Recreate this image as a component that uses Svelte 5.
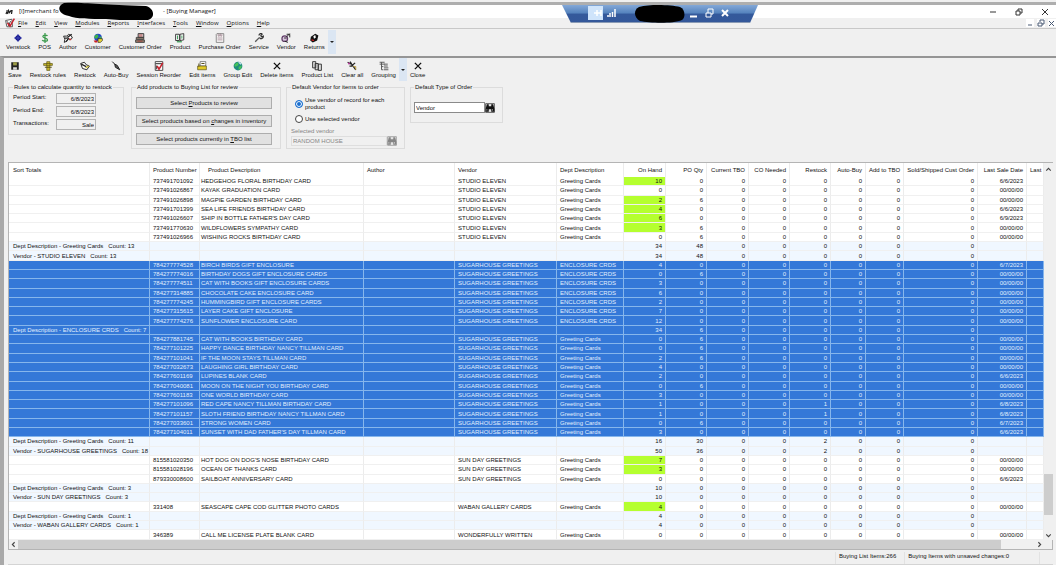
<script lang="ts" module>
	type Item = {
		kind: "item";
		sku: string;
		name: string;
		vendor: string;
		dept: string;
		onHand: number;
		poQty: number;
		restock: number;
		date: string;
		selected: boolean;
	};

	type Total = {
		kind: "total";
		label: string;
		onHand: number;
		poQty: number;
		restock: number;
		selected: boolean;
	};

	export type Row = Item | Total;

	type Entry = [sku: string, name: string, onHand: number, poQty: number, date?: string, restock?: number];

	const NO_DATE = "00/00/00";

	function items(vendor: string, dept: string, selected: boolean, entries: Entry[]): Row[] {
		return entries.map(([sku, name, onHand, poQty, date = NO_DATE, restock = 0]) => ({
			kind: "item",
			sku,
			name,
			vendor,
			dept,
			onHand,
			poQty,
			restock,
			date,
			selected
		}));
	}

	function total(label: string, onHand: number, poQty: number, restock = 0, selected = false): Row {
		return { kind: "total", label, onHand, poQty, restock, selected };
	}

	const rows: Row[] = [
		...items("STUDIO ELEVEN", "Greeting Cards", false, [
			["737491701092", "HEDGEHOG FLORAL BIRTHDAY CARD", 10, 0, "6/6/2023"],
			["737491026867", "KAYAK GRADUATION CARD", 0, 0],
			["737491026898", "MAGPIE GARDEN BIRTHDAY CARD", 2, 6],
			["737491701399", "SEA LIFE FRIENDS BIRTHDAY CARD", 4, 0, "6/6/2023"],
			["737491026607", "SHIP IN BOTTLE FATHER'S DAY CARD", 6, 0, "6/9/2023"],
			["737491770630", "WILDFLOWERS SYMPATHY CARD", 3, 6],
			["737491026966", "WISHING ROCKS BIRTHDAY CARD", 0, 6]
		]),
		total("Dept Description - Greeting Cards   Count: 13", 34, 48),
		total("Vendor - STUDIO ELEVEN   Count: 13", 34, 48),
		...items("SUGARHOUSE GREETINGS", "ENCLOSURE CRDS", true, [
			["784277774528", "BIRCH BIRDS GIFT ENCLOSURE", 4, 0, "6/7/2023"],
			["784277774016", "BIRTHDAY DOGS GIFT ENCLOSURE CARDS", 0, 6],
			["784277774511", "CAT WITH BOOKS GIFT ENCLOSURE CARDS", 3, 0],
			["784277314885", "CHOCOLATE CAKE ENCLOSURE CARD", 6, 0],
			["784277774245", "HUMMINGBIRD GIFT ENCLOSURE CARDS", 2, 0],
			["784277315615", "LAYER CAKE GIFT ENCLOSURE", 7, 0],
			["784277774276", "SUNFLOWER ENCLOSURE CARD", 12, 0]
		]),
		total("Dept Description - ENCLOSURE CRDS   Count: 7", 34, 6, 0, true),
		...items("SUGARHOUSE GREETINGS", "Greeting Cards", true, [
			["784277881745", "CAT WITH BOOKS BIRTHDAY CARD", 0, 6],
			["784277101225", "HAPPY DANCE BIRTHDAY NANCY TILLMAN CARD", 0, 6],
			["784277101041", "IF THE MOON STAYS TILLMAN CARD", 2, 6],
			["784277032673", "LAUGHING GIRL BIRTHDAY CARD", 4, 0],
			["784277601169", "LUPINES BLANK CARD", 2, 0, "6/6/2023"],
			["784277040081", "MOON ON THE NIGHT YOU BIRTHDAY CARD", 0, 6],
			["784277601183", "ONE WORLD BIRTHDAY CARD", 3, 0],
			["784277101096", "RED CAPE NANCY TILLMAN BIRTHDAY CARD", 1, 0, "6/8/2023", 1],
			["784277101157", "SLOTH FRIEND BIRTHDAY NANCY TILLMAN CARD", 1, 0, "6/8/2023", 1],
			["784277033601", "STRONG WOMEN CARD", 0, 6, "6/7/2023"],
			["784277104011", "SUNSET WITH DAD FATHER'S DAY TILLMAN CARD", 3, 0, "6/6/2023"]
		]),
		total("Dept Description - Greeting Cards   Count: 11", 16, 30, 2),
		total("Vendor - SUGARHOUSE GREETINGS   Count: 18", 50, 36, 2),
		...items("SUN DAY GREETINGS", "Greeting Cards", false, [
			["815581020350", "HOT DOG ON DOG'S NOSE BIRTHDAY CARD", 7, 0],
			["815581028196", "OCEAN OF THANKS CARD", 3, 0],
			["879330008600", "SAILBOAT ANNIVERSARY CARD", 0, 0, "6/6/2023"]
		]),
		total("Dept Description - Greeting Cards   Count: 3", 10, 0),
		total("Vendor - SUN DAY GREETINGS   Count: 3", 10, 0),
		...items("WABAN GALLERY CARDS", "Greeting Cards", false, [
			["331408", "SEASCAPE CAPE COD GLITTER PHOTO CARDS", 4, 0]
		]),
		total("Dept Description - Greeting Cards   Count: 1", 4, 0),
		total("Vendor - WABAN GALLERY CARDS   Count: 1", 4, 0),
		...items("WONDERFULLY WRITTEN", "Greeting Cards", false, [
			["346389", "CALL ME LICENSE PLATE BLANK CARD", 0, 0]
		])
	];

	const columns = [
		{ title: "Sort Totals", width: 141 },
		{ title: "Product Number", width: 50 },
		{ title: "Product Description", width: 164, indent: true },
		{ title: "Author", width: 91 },
		{ title: "Vendor", width: 102 },
		{ title: "Dept Description", width: 67 },
		{ title: "On Hand", width: 42, num: true },
		{ title: "PO Qty", width: 41, num: true },
		{ title: "Current TBO", width: 42, num: true },
		{ title: "CO Needed", width: 41, num: true },
		{ title: "Restock", width: 41, num: true },
		{ title: "Auto-Buy", width: 35, num: true },
		{ title: "Add to TBO", width: 38, num: true },
		{ title: "Sold/Shipped Cust Order", width: 74, num: true },
		{ title: "Last Sale Date", width: 49, num: true },
		{ title: "Last", width: 17 }
	];

	// The letter after the & is the access key.
	const menus = [
		"&File",
		"&Edit",
		"&View",
		"&Modules",
		"&Reports",
		"&Interfaces",
		"&Tools",
		"&Window",
		"&Options",
		"&Help"
	];

	const mainTools = [
		["venstock", "Venstock"],
		["pos", "POS"],
		["author", "Author"],
		["customer", "Customer"],
		["register", "Customer Order"],
		["product", "Product"],
		["order", "Purchase Order"],
		["service", "Service"],
		["vendor", "Vendor"],
		["returns", "Returns"]
	];

	const listTools = [
		["save", "Save"],
		["rules", "Restock rules"],
		["restock", "Restock"],
		["autobuy", "Auto-Buy"],
		["session", "Session Reorder"],
		["edit", "Edit items"],
		["globe", "Group Edit"],
		["x", "Delete items"],
		["list", "Product List"],
		["clear", "Clear all"],
		["grouping", "Grouping"]
	];
</script>

<script lang="ts">
	let vendorMode = $state("record");
	let orderType = $state("Vendor");
</script>

{#snippet keyed(text: string)}
	{@const at = text.indexOf("&")}
	{text.slice(0, at)}<u>{text[at + 1]}</u>{text.slice(at + 2)}
{/snippet}

{#snippet icon(name: string)}
	<svg class="icon" viewBox="0 0 16 16" aria-hidden="true">
		{#if name === "venstock"}
			<path d="M8 2 14 8 8 14 2 8z" fill="#15158c" />
			<path d="M8 2v12M2 8h12" stroke="#5560c8" stroke-width="1" />
		{:else if name === "pos"}
			<path
				d="M12 4.500C11 3 5 2.500 4.500 5.500S12 8 12 11 5 13.500 3.500 11.500M8 0v16"
				fill="none"
				stroke="#3c9a4c"
				stroke-width="2"
			/>
		{:else if name === "author"}
			<path d="M1 5h5l3-3 4 2 2 4-4 3-3-2-2 4-4 2 1-5z" fill="#fff" stroke="#222" stroke-width="1.500" />
			<path d="M7 7l7-5M5 14l4-6M3 8h4" stroke="#222" stroke-width="2" />
			<path d="M10 9l3 2" stroke="#b33" stroke-width="2" />
		{:else if name === "customer"}
			<circle cx="8" cy="7" r="6" fill="#2449c8" />
			<path d="M3 4l4-2 2 3-3 4-4-1zM9 8l4-3 1 4-3 2z" fill="#3fb54a" />
			<path d="M8 9h7v3l-3 3H8z" fill="#e9d33a" stroke="#222" />
			<path d="M1 12h6v3H3z" fill="#c22" />
		{:else if name === "register"}
			<path d="M5 1h9v6H5z" fill="#ddd" stroke="#333" stroke-width="1.500" />
			<path d="M2 7h12v3H2zM1 11h14v4H1z" fill="#987" stroke="#333" stroke-width="1.300" />
			<path d="M6 3h6M6 5h6M4 13h8" stroke="#a22" />
		{:else if name === "product"}
			<path d="M1 2h6v10H1zM8 2l6-1v10l-6 1z" fill="#fff" stroke="#333" stroke-width="1.500" />
			<path d="M3 13h8v2H3z" fill="#3a9a55" />
			<path d="M4 4v6M11 4v5" stroke="#3a9a55" stroke-width="1.500" />
		{:else if name === "order"}
			<path d="M3 1h11v14H2V2z" fill="#faf7f7" stroke="#777" stroke-width="1.300" />
			<path d="M5 1v4h2V2M9 1v4h2V2M4 8h8M4 11h8" fill="none" stroke="#867" />
		{:else if name === "service"}
			<path
				d="M2 14l7-7M8 4c0-3 4-4 5-2L11 4l1 2 3-1c0 4-4 5-6 3"
				fill="none"
				stroke="#333"
				stroke-width="2"
			/>
			<path d="M3 14l7-7" stroke="#ddd" />
		{:else if name === "vendor"}
			<circle cx="6" cy="9" r="4.500" fill="#d9c4de" stroke="#634069" stroke-width="2" />
			<path d="M9 6l5-5M9 2h5v5M5 8h4M6 13l5 2" fill="none" stroke="#222" stroke-width="1.500" />
		{:else if name === "returns"}
			<path d="M3 6l7-5 5 3-2 8-7 3-4-3z" fill="#111" />
			<path d="M7 5l3-2 1 4-3 2z" fill="#fff" />
			<path d="M4 11l4 1" stroke="#d22" stroke-width="2" />
		{:else if name === "save"}
			<path d="M2 2h12v12H2z" fill="#222" />
			<path d="M5 2h6v5H5z" fill="#9a9a45" />
			<path d="M5 10h6v4H5z" fill="#ddd" />
		{:else if name === "rules"}
			<path d="M6 1h5v14H6zM1 4h14v3H1z" fill="#c8b82c" stroke="#554d10" />
			<path d="M3 10h11" stroke="#554d10" stroke-width="1.500" />
		{:else if name === "restock"}
			<path d="M1 4l6-2 3 4 5 2-4 6-7-2z" fill="#fff" stroke="#222" stroke-width="1.500" />
			<path d="M2 5l8 4" stroke="#222" stroke-width="2" />
			<path d="M9 11l5-3" stroke="#c9bb35" stroke-width="2" />
		{:else if name === "autobuy"}
			<path d="M2 1l5 5M6 5l4 2 4 7-7-4z" fill="#555" stroke="#222" stroke-width="1.600" />
		{:else if name === "session"}
			<path d="M2 1h12v14H2z" fill="#fff" stroke="#444" stroke-width="1.500" />
			<path d="M2 4h11M4 7v6" stroke="#555" stroke-width="2" />
			<path d="M5 8l3 5 6-10" fill="none" stroke="#c8222e" stroke-width="2.500" />
		{:else if name === "edit"}
			<path d="M5 1h9v7H5z" fill="#fff" stroke="#444" />
			<path d="M1 8h14v6H1z" fill="#e0c928" stroke="#4d4510" />
			<path d="M3 4v5M7 4h5" stroke="#4d4510" stroke-width="1.500" />
		{:else if name === "globe"}
			<circle cx="8" cy="8" r="7" fill="#1f8c7f" />
			<path d="M2 6l5-4 2 3-2 3-4 1zM9 9l5-2-1 5-4 2z" fill="#46c258" />
			<path d="M9 2l4 3" stroke="#cfe7f5" stroke-width="2" />
		{:else if name === "x"}
			<path d="M3 3l10 10M13 3 3 13" stroke="#111" stroke-width="2.200" />
		{:else if name === "list"}
			<path d="M1 1h5v10H1zM5 4h5v10H5zM10 5h5v10h-5z" fill="#ddd" stroke="#333" stroke-width="1.500" />
		{:else if name === "clear"}
			<path d="M1 2l5 3M5 1l3 5 6 8M13 3L7 8M4 8h4" stroke="#222" stroke-width="2" />
			<path d="M10 9h4v5" fill="none" stroke="#b89b38" stroke-width="1.500" />
			<circle cx="3" cy="4" r="1.500" fill="#c03fa4" />
		{:else if name === "grouping"}
			<path d="M1 2h8M1 5h8M4 2v12h3M4 9h3" fill="none" stroke="#555" stroke-width="1.500" />
			<path d="M8 5h6M8 8h6M8 11h7M8 14h7" stroke="#555" stroke-width="1.500" />
		{:else if name === "binoculars"}
			<path d="M1 1h14v14H1z" fill="#e4e4e4" stroke="currentColor" />
			<path d="M3 2h3v3h4V2h3l2 7v5h-5v-4H6v4H1V9z" fill="currentColor" />
			<path d="M3 10v2M12 10v2" stroke="#fff" />
		{/if}
	</svg>
{/snippet}

{#snippet tool(name: string, label: string)}
	<button class="tool" type="button">
		{@render icon(name)}
		<span>{label}</span>
	</button>
{/snippet}

<div class="window">
	<header class="title-bar">
		<svg class="logo" viewBox="0 0 16 10" aria-hidden="true">
			<path d="M3 2h2M2 9l2-5M5 9l2-7 2 4 3-4 2 0-1 7" fill="none" stroke="#222" stroke-width="2.500" />
		</svg>
		<span class="app-name">[i]merchant fo</span>
		<span>- [Buying Manager]</span>
		<div class="window-buttons">
			<button type="button" aria-label="Minimize">
				<svg viewBox="0 0 8 8"><path d="M1 4h6" /></svg>
			</button>
			<button type="button" aria-label="Restore">
				<svg viewBox="0 0 8 8"><path d="M1 3h4v4H1zM3 3V1h4v4H5" /></svg>
			</button>
			<button type="button" aria-label="Close">
				<svg viewBox="0 0 8 8"><path d="M1 1l6 6M7 1 1 7" /></svg>
			</button>
		</div>
		<svg class="redaction" viewBox="0 0 96 18" aria-hidden="true">
			<path d="M6 1C25 0 40 3 88 4c8 2 10 12 2 14-12 2-26 0-42-1-16 0-30 0-37-3C2 13-3 5 6 1z" />
		</svg>
	</header>

	<nav class="menu-bar" aria-label="Menu">
		<svg class="doc-icon" viewBox="0 0 16 16" aria-hidden="true">
			<path d="M1 4l10-2 1 12H3z" fill="#fff" stroke="#555" stroke-width="1.500" />
			<path d="M3 5l6 8M9 5l-4 8" stroke="#444" stroke-width="1.500" />
			<path d="M4 8l4 5 7-12" fill="none" stroke="#c8222e" stroke-width="2.500" />
		</svg>
		{#each menus as menu (menu)}
			<button class="menu" type="button">{@render keyed(menu)}</button>
		{/each}
		<div class="mdi-buttons">
			<button type="button" aria-label="Minimize child">
				<svg viewBox="0 0 8 8"><path d="M2 6h4" /></svg>
			</button>
			<button type="button" aria-label="Restore child">
				<svg viewBox="0 0 8 8"><path d="M1 4h4v3H1zM3 3V1h4v4H5" /></svg>
			</button>
			<button type="button" aria-label="Close child">
				<svg viewBox="0 0 8 8"><path d="M1 2l5 5M6 2 1 7" /></svg>
			</button>
		</div>
	</nav>

	<div class="toolbar" role="toolbar" aria-label="Modules">
		{#each mainTools as [name, label] (name)}
			{@render tool(name, label)}
		{/each}
		<button class="more" type="button" aria-label="More modules"></button>
	</div>

	<main class="child">
		<div class="toolbar list-toolbar" role="toolbar" aria-label="Buying list">
			{#each listTools as [name, label] (name)}
				{@render tool(name, label)}
			{/each}
			<button class="more" type="button" aria-label="More actions"></button>
			{@render tool("x", "Close")}
		</div>

		<div class="panels">
			<fieldset class="rules">
				<legend>Rules to calculate quantity to restock</legend>
				<label for="start">Period Start:</label>
				<input id="start" value="6/8/2023" readonly />
				<label for="end">Period End:</label>
				<input id="end" value="6/8/2023" readonly />
				<label for="trans">Transactions:</label>
				<input id="trans" value="Sale" readonly />
			</fieldset>

			<fieldset class="add">
				<legend>Add products to Buying List for review</legend>
				<button type="button">{@render keyed("Select &Products to review")}</button>
				<button type="button">{@render keyed("Select products based on &changes in inventory")}</button>
				<button type="button">{@render keyed("Select products currently in &TBO list")}</button>
			</fieldset>

			<fieldset class="vendor">
				<legend>Default Vendor for items to order</legend>
				<label class="radio">
					<input type="radio" name="vendor-mode" value="record" bind:group={vendorMode} />
					Use vendor of record for each product
				</label>
				<label class="radio">
					<input type="radio" name="vendor-mode" value="selected" bind:group={vendorMode} />
					Use selected vendor
				</label>
				<label class="dim" for="selected-vendor">Selected vendor</label>
				<div class="lookup dim">
					<input id="selected-vendor" value="RANDOM HOUSE" disabled={vendorMode === "record"} />
					<button type="button" aria-label="Find vendor" disabled={vendorMode === "record"}>
						{@render icon("binoculars")}
					</button>
				</div>
			</fieldset>

			<fieldset class="type">
				<legend>Default Type of Order</legend>
				<div class="lookup">
					<input aria-label="Default type of order" bind:value={orderType} />
					<button type="button" aria-label="Find order type">{@render icon("binoculars")}</button>
				</div>
			</fieldset>
		</div>

		<section class="list" aria-label="Buying list">
			<table>
				<colgroup>
					{#each columns as column (column.title)}
						<col style="width: {column.width}px" />
					{/each}
				</colgroup>
				<thead>
					<tr>
						{#each columns as column (column.title)}
							<th class:num={column.num} class:indent={column.indent}>{column.title}</th>
						{/each}
					</tr>
				</thead>
				<tbody>
					{#each rows as row, i (i)}
						<tr class={row.kind} class:selected={row.selected}>
							{#if row.kind === "item"}
								<td></td>
								<td>{row.sku}</td>
								<td class="name">{row.name}</td>
								<td></td>
								<td>{row.vendor}</td>
								<td>{row.dept}</td>
							{:else}
								<td class="label">{row.label}</td>
								<td></td>
								<td></td>
								<td></td>
								<td></td>
								<td></td>
							{/if}
							<td class="num" class:stocked={row.kind === "item" && row.onHand > 0}>{row.onHand}</td>
							<td class="num">{row.poQty}</td>
							<td class="num">0</td>
							<td class="num">0</td>
							<td class="num">{row.restock}</td>
							<td class="num">0</td>
							<td class="num">0</td>
							<td class="num">0</td>
							<td class="num">{row.kind === "item" ? row.date : ""}</td>
							<td></td>
						</tr>
					{/each}
				</tbody>
			</table>
			<div class="scroll vertical">
				<svg viewBox="0 0 8 8"><path d="M2 5l2-2 2 2" /></svg>
				<div class="track"><div class="thumb"></div></div>
				<svg viewBox="0 0 8 8"><path d="M2 3l2 2 2-2" /></svg>
			</div>
			<div class="scroll horizontal">
				<svg viewBox="0 0 8 8"><path d="M5 2 3 4l2 2" /></svg>
				<div class="track"><div class="thumb"></div></div>
				<svg viewBox="0 0 8 8"><path d="M3 2l2 2-2 2" /></svg>
			</div>
		</section>

		<footer class="status">
			<span>Buying List Items:266</span>
			<span>Buying Items with unsaved changes:0</span>
		</footer>
	</main>

	<!-- Remote session bar, pinned over the title bar -->
	<div class="session-bar">
		<svg viewBox="0 0 196 18" aria-hidden="true">
			<defs>
				<linearGradient id="session-fill" x1="0" y1="0" x2="0" y2="1">
					<stop offset="0" stop-color="#83a8d8" />
					<stop offset="0.450" stop-color="#5583bd" />
					<stop offset="0.500" stop-color="#34599b" />
					<stop offset="1" stop-color="#34589a" />
				</linearGradient>
			</defs>
			<path d="M0 0h196l-8 18H9z" fill="url(#session-fill)" />
			<path d="M9 17.500h179" stroke="#8a9bb5" />
			<path d="M26 1h15v14H26z" fill="#cfe4fb" />
			<path d="M32 8h3M35 5v6M35 8h4M39 5v6" fill="none" stroke="#fff" stroke-width="1.500" />
			<path d="M46 12v-2M48 12V8M50.500 12V7M53 12V4" stroke="#fff" stroke-width="1.500" />
			<path d="M77 2c12-3 32-2 41 0 5 2 6 10 2 13-10 4-32 3-42 1-6-3-7-11-1-14z" fill="#000" />
			<path d="M128 11.500h7" stroke="#fff" stroke-width="2" />
			<path d="M144 8h5v4h-5zM146 8V4h5v5h-2" fill="none" stroke="#fff" />
			<path d="M160 5l6 6M166 5l-6 6" stroke="#fff" stroke-width="2" />
		</svg>
	</div>
</div>

<style>
	:global(body) {
		margin: 0;
		background: #f0f0f0;
	}

	.window {
		position: relative;
		display: flex;
		flex-direction: column;
		box-sizing: border-box;
		min-height: 100vh;
		padding-top: 2px;
		font-family: "Liberation Sans", Arial, sans-serif;
		font-size: 6px;
		line-height: 9px;
		color: #111;
		background: #f0f0f0;
	}

	button,
	input {
		box-sizing: border-box;
		margin: 0;
		padding: 0;
		font: inherit;
		color: inherit;
		background: transparent;
		border: none;
		border-radius: 0;
	}

	.title-bar {
		position: relative;
		display: flex;
		align-items: center;
		height: 13px;
		padding-left: 5px;
		font-family: "Open Sans", "Noto Sans", sans-serif;
		background: #fff;
		border-top: 3px solid #aeaeae;
	}

	.logo {
		width: 8px;
		height: 6px;
		margin-right: 6px;
	}

	.app-name {
		width: 144px;
	}

	.window-buttons {
		display: flex;
		gap: 18px;
		margin-left: auto;
		padding-right: 7px;
	}

	.window-buttons button,
	.mdi-buttons button {
		display: flex;
		width: 8px;
		height: 8px;
	}

	.window-buttons svg,
	.mdi-buttons svg {
		width: 8px;
		height: 8px;
		fill: none;
		stroke: #333;
	}

	.redaction {
		position: absolute;
		top: -3px;
		left: 58px;
		width: 96px;
		height: 18px;
		z-index: 1;
	}

	.menu-bar {
		display: flex;
		align-items: center;
		gap: 8px;
		height: 10px;
		padding-left: 5px;
		font-family: "Open Sans", "Noto Sans", sans-serif;
		border-bottom: 1px solid #c8c8c8;
	}

	.doc-icon {
		width: 10px;
		height: 10px;
		margin-right: -5px;
	}

	.mdi-buttons {
		display: flex;
		gap: 3px;
		margin-left: auto;
	}

	.mdi-buttons button {
		background: #fff;
	}

	.mdi-buttons svg {
		stroke: #4a5a75;
	}

	.toolbar {
		display: flex;
		align-items: flex-start;
		gap: 8px;
		height: 24px;
		padding: 1px 0 2px 6px;
	}

	.tool {
		display: flex;
		flex-direction: column;
		align-items: center;
		padding-top: 3px;
		white-space: nowrap;
	}

	.icon {
		width: 10px;
		height: 10px;
	}

	.more {
		align-self: stretch;
		width: 8px;
		margin-left: -5px;
		background: #dbe6f3;
	}

	.more::after {
		display: block;
		width: 0;
		margin: 2px auto 0;
		content: "";
		border: 2px solid transparent;
		border-top-color: #222;
	}

	.child {
		display: flex;
		flex: 1;
		flex-direction: column;
		padding: 0 3px 0 4px;
		border-top: 2px solid #959595;
		border-left: 4px solid #a9a9a9;
	}

	.list-toolbar {
		height: 23px;
		padding: 0 0 2px;
	}

	.list-toolbar .more {
		margin: 0 -5px;
	}

	.panels {
		display: flex;
		align-items: flex-start;
		gap: 5px;
		padding-bottom: 13px;
	}

	fieldset {
		box-sizing: border-box;
		min-width: 0;
		margin: 0;
		padding: 1px 4px 4px;
		border: 1px solid #dcdcdc;
	}

	legend {
		padding: 0 1px;
	}

	.rules {
		display: grid;
		grid-template-columns: 38px 40px;
		gap: 2px 5px;
		width: 116px;
		margin-right: 2px;
	}

	.rules input {
		width: 40px;
		height: 11px;
		padding-right: 1px;
		text-align: right;
		border: 1px solid #b4b4b4;
	}

	.add {
		display: flex;
		flex-direction: column;
		gap: 6px;
		width: 150px;
		padding: 5px 8px 3px 4px;
	}

	.add button {
		width: 136px;
		height: 12px;
		white-space: nowrap;
		background: #e1e1e1;
		border: 1px solid #adadad;
	}

	.vendor {
		width: 119px;
		padding-bottom: 2px;
	}

	.radio {
		display: flex;
		align-items: center;
		gap: 2px;
		width: 100px;
		margin: 4px 0 4px 4px;
		line-height: 7px;
	}

	.radio input {
		flex: none;
		width: 8px;
		height: 8px;
		appearance: none;
		background: #fff;
		border: 1px solid #444;
		border-radius: 50%;
	}

	.radio input:checked {
		background: #1a6fd0;
		border-color: #1a6fd0;
		box-shadow: inset 0 0 0 1px #fff;
	}

	.dim {
		color: #858585;
	}

	.lookup {
		display: flex;
		align-items: center;
	}

	.lookup input {
		width: 96px;
		height: 10px;
		padding-left: 1px;
		border: 1px solid #dedede;
	}

	.lookup button {
		display: flex;
		width: 10px;
		height: 10px;
	}

	.type {
		width: 93px;
		padding: 10px 3px 9px;
	}

	.type input {
		width: 71px;
		height: 11px;
		background: #fff;
		border-color: #8a8a8a;
	}

	.list {
		display: grid;
		flex: 1;
		grid-template-rows: 1fr 9px;
		grid-template-columns: 1fr 9px;
		background: #f0f0f0;
		border: 1px solid #b4b4b4;
	}

	table {
		width: 100%;
		height: 100%;
		table-layout: fixed;
		border-spacing: 0;
		background: #fff;
	}

	th,
	td {
		padding: 0 3px;
		overflow: hidden;
		font-weight: 400;
		text-align: left;
		white-space: pre;
		border-right: 1px solid #ececec;
	}

	th {
		height: 14px;
	}

	th:first-child,
	.label {
		padding-left: 4px;
	}

	th:last-child {
		padding-right: 0;
	}

	.indent {
		padding-left: 8px;
	}

	td {
		line-height: 8px;
		border-bottom: 1px solid #f0f0f0;
	}

	.name {
		padding-left: 1px;
	}

	.num {
		text-align: right;
	}

	.stocked {
		background: #b5ff2f;
	}

	.total td {
		background: #f0f7ff;
	}

	.selected td {
		color: #e2effd;
		background: #3478d8;
		border-color: #86b6ec;
	}

	.scroll {
		display: flex;
		background: #f0f0f0;
	}

	.scroll svg {
		flex: none;
		width: 9px;
		height: 9px;
		fill: none;
		stroke: #444;
	}

	.scroll .track {
		display: flex;
		flex: 1;
	}

	.thumb {
		background: #cdcdcd;
	}

	.vertical {
		flex-direction: column;
		padding-top: 2px;
	}

	.vertical .track {
		flex-direction: column;
		justify-content: flex-end;
		padding-bottom: 16px;
	}

	.vertical .thumb {
		height: 41px;
	}

	.horizontal .track {
		padding-right: 34px;
	}

	.horizontal .thumb {
		flex: 1;
	}

	.status {
		display: flex;
		justify-content: flex-end;
		gap: 8px;
		height: 12px;
		padding: 2px 13px 0 0;
		border-bottom: 1px solid #d4d4d4;
	}

	.status span {
		padding-left: 3px;
		border-left: 1px solid #e2e2e2;
	}

	.status span:last-child {
		padding-right: 30px;
		border-right: 1px solid #e2e2e2;
	}

	.session-bar {
		position: absolute;
		top: 5px;
		left: 562px;
		width: 196px;
		height: 18px;
	}

	.session-bar svg {
		display: block;
	}
</style>
